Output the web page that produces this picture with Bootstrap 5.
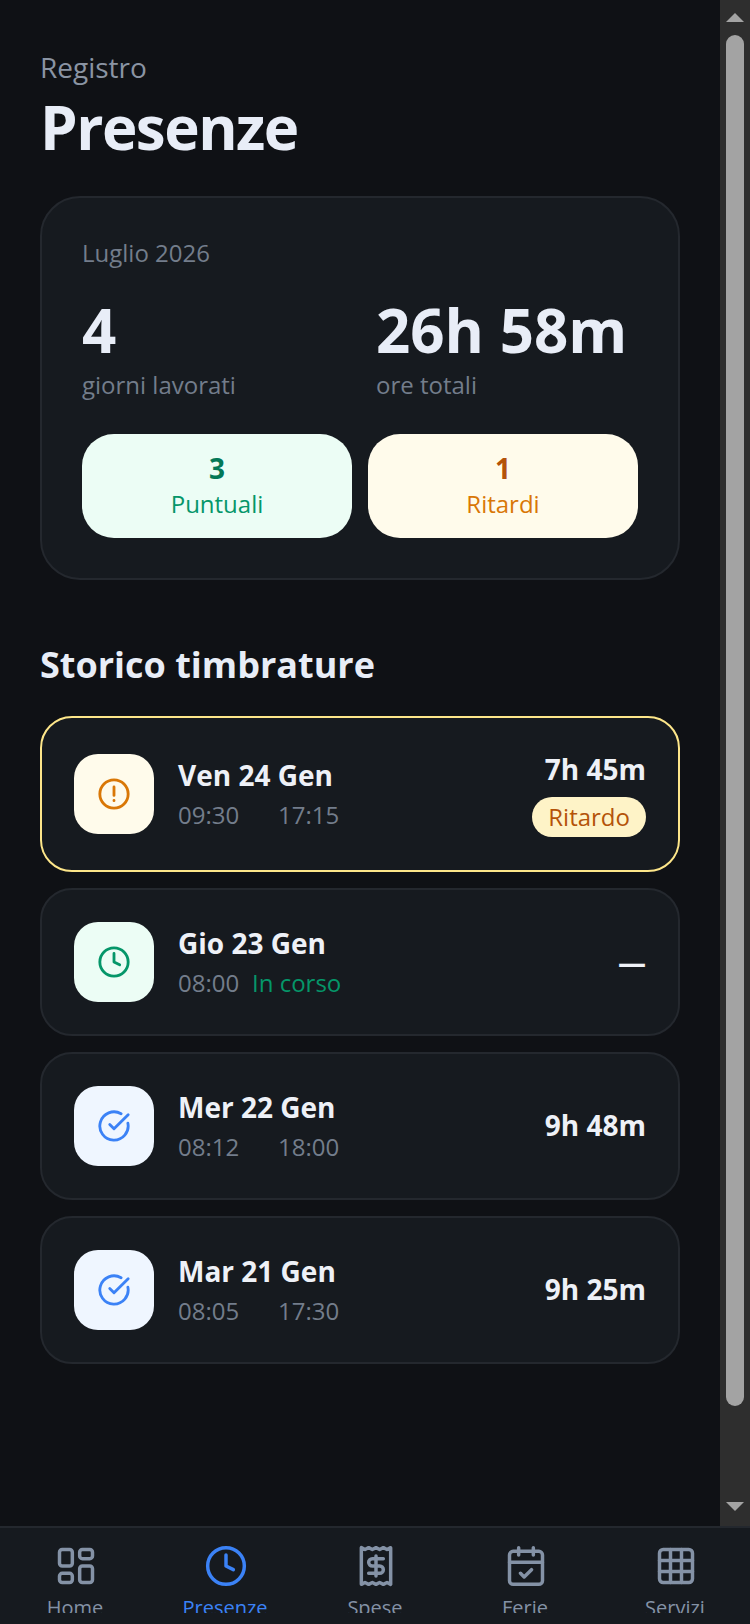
<!DOCTYPE html>
<html lang="it">
<head>
	<meta charset="UTF-8">
	<meta name="viewport" content="width=device-width, initial-scale=1.0">
	<title>Presenze</title>
	<link href="https://cdn.jsdelivr.net/npm/bootstrap@5.3.0/dist/css/bootstrap.min.css" rel="stylesheet">
	<style>
		html, body { height: 100%; overflow: hidden; }
		body { background: #0f1115; font-family: "Open Sans", sans-serif; color: #e8edf7; }
		.app-shell { height: 1624px; }
		.app-top { height: 1526px; }
		.app-main { padding: 49px 40px 0; width: 720px; }
		.page-kicker { font-size: 28px; line-height: 36px; color: #8a94a3; margin-bottom: 1px; }
		.page-title { font-size: 60px; line-height: 82px; font-weight: 700; letter-spacing: -1.5px; margin: 0 0 28px; color: #e8edf7; }
		.summary-box { background: #161a1f; border: 2px solid #24282e; border-radius: 40px; padding: 39px 40px 40px; height: 384px; }
		.muted-line { font-size: 24px; line-height: 32px; color: #737d8b; }
		.big-num { font-size: 60px; line-height: 72px; font-weight: 700; margin-top: 25px; margin-bottom: 3px; color: #e8edf7; }
		.stat-left { width: 294px; }
		.pill-row { margin-top: 33px; }
		.pill-box { border-radius: 32px; height: 104px; flex: 1 1 0; text-align: center; padding-top: 17px; font-size: 24px; line-height: 36px; }
		.pill-box b { display: block; font-size: 28px; line-height: 35px; font-weight: 700; }
		.pill-green { background: #ecfdf5; color: #059669; }
		.pill-green b { color: #047857; }
		.pill-amber { background: #fffbeb; color: #d97706; }
		.pill-amber b { color: #b45309; }
		.section-title { font-size: 36px; line-height: 48px; font-weight: 700; margin: 61px 0 27px; color: #e8edf7; }
		.punch-row { background: #161a1f; border: 2px solid #24282e; border-radius: 32px; padding: 0 32px; height: 148px; }
		.punch-row.is-late { border-color: #fde68a; height: 156px; }
		.punch-icon { width: 80px; height: 80px; border-radius: 24px; }
		.punch-date { font-size: 28px; line-height: 38px; font-weight: 700; color: #eef1f7; }
		.punch-times { font-size: 24px; line-height: 34px; color: #737d8b; margin-top: 4px; }
		.time-cell { width: 78px; }
		.time-end { margin-left: 22px; }
		.live-note { color: #059669; margin-left: -4px; }
		.punch-total { font-size: 28px; line-height: 38px; font-weight: 700; color: #eef1f7; }
		.punch-side { padding-bottom: 2px; }
		.late-tag { background: #fef3c7; color: #b45309; font-size: 24px; line-height: 40px; border-radius: 20px; padding: 0 16px; margin-top: 9px; }
		.scroll-rail { width: 30px; background: #2e2e2e; padding-top: 13px; }
		.rail-thumb { width: 18px; height: 1371px; background: #a3a3a3; border-radius: 9px; margin: 13px 0 96px; }
		.tab-strip { height: 98px; background: #161a1f; border-top: 2px solid #24282e; }
		.tab-link { width: 150px; padding-top: 16px; color: #8492a6; text-decoration: none; }
		.tab-link svg { display: block; margin-left: 2px; }
		.tab-link.is-active { color: #3b82f6; }
		.tab-label { font-size: 20px; line-height: 28px; height: 19px; overflow: hidden; margin-top: 6px; }
	</style>
</head>
<body>
	<div class="app-shell d-flex flex-column">
		<div class="app-top d-flex">
			<main class="app-main flex-shrink-0">
				<div class="page-kicker">Registro</div>
				<h1 class="page-title">Presenze</h1>

				<!-- Riepilogo mese -->
				<section class="summary-box">
					<div class="muted-line">Luglio 2026</div>
					<div class="d-flex">
						<div class="stat-left">
							<div class="big-num">4</div>
							<div class="muted-line">giorni lavorati</div>
						</div>
						<div>
							<div class="big-num">26h 58m</div>
							<div class="muted-line">ore totali</div>
						</div>
					</div>
					<div class="pill-row d-flex gap-3">
						<div class="pill-box pill-green"><b>3</b>Puntuali</div>
						<div class="pill-box pill-amber"><b>1</b>Ritardi</div>
					</div>
				</section>

				<h2 class="section-title">Storico timbrature</h2>

				<div class="d-flex flex-column gap-3">
					<div class="punch-row is-late d-flex align-items-center">
						<div class="punch-icon d-flex align-items-center justify-content-center flex-shrink-0" style="background:#fffbeb">
							<svg width="34" height="34" viewBox="0 0 24 24" fill="none" stroke="#d97706" stroke-width="2" stroke-linecap="round"><circle cx="12" cy="12" r="10"/><path d="M12 7v6M12 16.600v.1"/></svg>
						</div>
						<div class="ms-4 flex-grow-1">
							<div class="punch-date">Ven 24 Gen</div>
							<div class="punch-times d-flex"><span class="time-cell">09:30</span><span class="time-end">17:15</span></div>
						</div>
						<div class="punch-side d-flex flex-column align-items-end">
							<div class="punch-total">7h 45m</div>
							<div class="late-tag">Ritardo</div>
						</div>
					</div>
					<div class="punch-row d-flex align-items-center">
						<div class="punch-icon d-flex align-items-center justify-content-center flex-shrink-0" style="background:#ecfdf5">
							<svg width="34" height="34" viewBox="0 0 24 24" fill="none" stroke="#059669" stroke-width="2" stroke-linecap="round" stroke-linejoin="round"><circle cx="12" cy="12" r="10"/><path d="M12 6v6l4 2"/></svg>
						</div>
						<div class="ms-4 flex-grow-1">
							<div class="punch-date">Gio 23 Gen</div>
							<div class="punch-times d-flex"><span class="time-cell">08:00</span><span class="live-note">In corso</span></div>
						</div>
						<div class="punch-total">—</div>
					</div>
					<div class="punch-row d-flex align-items-center">
						<div class="punch-icon d-flex align-items-center justify-content-center flex-shrink-0" style="background:#eff6ff">
							<svg width="34" height="34" viewBox="0 0 24 24" fill="none" stroke="#3b82f6" stroke-width="2" stroke-linecap="round" stroke-linejoin="round"><path d="M21.800 10A10 10 0 1 1 17 3.340"/><path d="m9 11 3 3L22 4"/></svg>
						</div>
						<div class="ms-4 flex-grow-1">
							<div class="punch-date">Mer 22 Gen</div>
							<div class="punch-times d-flex"><span class="time-cell">08:12</span><span class="time-end">18:00</span></div>
						</div>
						<div class="punch-total punch-side">9h 48m</div>
					</div>
					<div class="punch-row d-flex align-items-center">
						<div class="punch-icon d-flex align-items-center justify-content-center flex-shrink-0" style="background:#eff6ff">
							<svg width="34" height="34" viewBox="0 0 24 24" fill="none" stroke="#3b82f6" stroke-width="2" stroke-linecap="round" stroke-linejoin="round"><path d="M21.800 10A10 10 0 1 1 17 3.340"/><path d="m9 11 3 3L22 4"/></svg>
						</div>
						<div class="ms-4 flex-grow-1">
							<div class="punch-date">Mar 21 Gen</div>
							<div class="punch-times d-flex"><span class="time-cell">08:05</span><span class="time-end">17:30</span></div>
						</div>
						<div class="punch-total punch-side">9h 25m</div>
					</div>
				</div>
			</main>

			<div class="scroll-rail d-flex flex-column align-items-center">
				<svg width="18" height="9" viewBox="0 0 18 9"><path d="M9 0 18 9H0z" fill="#a3a3a3"/></svg>
				<div class="rail-thumb"></div>
				<svg width="18" height="9" viewBox="0 0 18 9"><path d="M0 0H18L9 9z" fill="#a3a3a3"/></svg>
			</div>
		</div>

		<!-- Barra di navigazione -->
		<nav class="tab-strip d-flex">
			<a class="tab-link d-flex flex-column align-items-center" href="#">
				<svg width="44" height="44" viewBox="0 0 24 24" fill="none" stroke="currentColor" stroke-width="1.900" stroke-linecap="round" stroke-linejoin="round"><rect x="3" y="3" width="7" height="9" rx="1.500"/><rect x="14" y="3" width="7" height="5" rx="1.500"/><rect x="14" y="12" width="7" height="9" rx="1.500"/><rect x="3" y="16" width="7" height="5" rx="1.500"/></svg>
				<div class="tab-label">Home</div>
			</a>
			<a class="tab-link is-active d-flex flex-column align-items-center" href="#">
				<svg width="44" height="44" viewBox="0 0 24 24" fill="none" stroke="currentColor" stroke-width="1.900" stroke-linecap="round" stroke-linejoin="round"><circle cx="12" cy="12" r="10"/><path d="M12 6v6l4 2"/></svg>
				<div class="tab-label">Presenze</div>
			</a>
			<a class="tab-link d-flex flex-column align-items-center" href="#">
				<svg width="44" height="44" viewBox="0 0 24 24" fill="none" stroke="currentColor" stroke-width="1.900" stroke-linecap="round" stroke-linejoin="round"><path d="M4 2v20l2-1 2 1 2-1 2 1 2-1 2 1 2-1 2 1V2l-2 1-2-1-2 1-2-1-2 1-2-1-2 1Z"/><path d="M16 8h-6a2 2 0 1 0 0 4h4a2 2 0 1 1 0 4H8"/><path d="M12 17.500v-11"/></svg>
				<div class="tab-label">Spese</div>
			</a>
			<a class="tab-link d-flex flex-column align-items-center" href="#">
				<svg width="44" height="44" viewBox="0 0 24 24" fill="none" stroke="currentColor" stroke-width="1.900" stroke-linecap="round" stroke-linejoin="round"><rect x="3" y="4" width="18" height="18" rx="2"/><path d="M16 2v4M8 2v4M3 10h18M9 16l2 2 4-4"/></svg>
				<div class="tab-label">Ferie</div>
			</a>
			<a class="tab-link d-flex flex-column align-items-center" href="#">
				<svg width="44" height="44" viewBox="0 0 24 24" fill="none" stroke="currentColor" stroke-width="1.900" stroke-linecap="round" stroke-linejoin="round"><rect x="3" y="3" width="18" height="18" rx="2"/><path d="M3 9h18M3 15h18M9 3v18M15 3v18"/></svg>
				<div class="tab-label">Servizi</div>
			</a>
		</nav>
	</div>

	<script src="https://cdn.jsdelivr.net/npm/bootstrap@5.3.0/dist/js/bootstrap.bundle.min.js"></script>
</body>
</html>
